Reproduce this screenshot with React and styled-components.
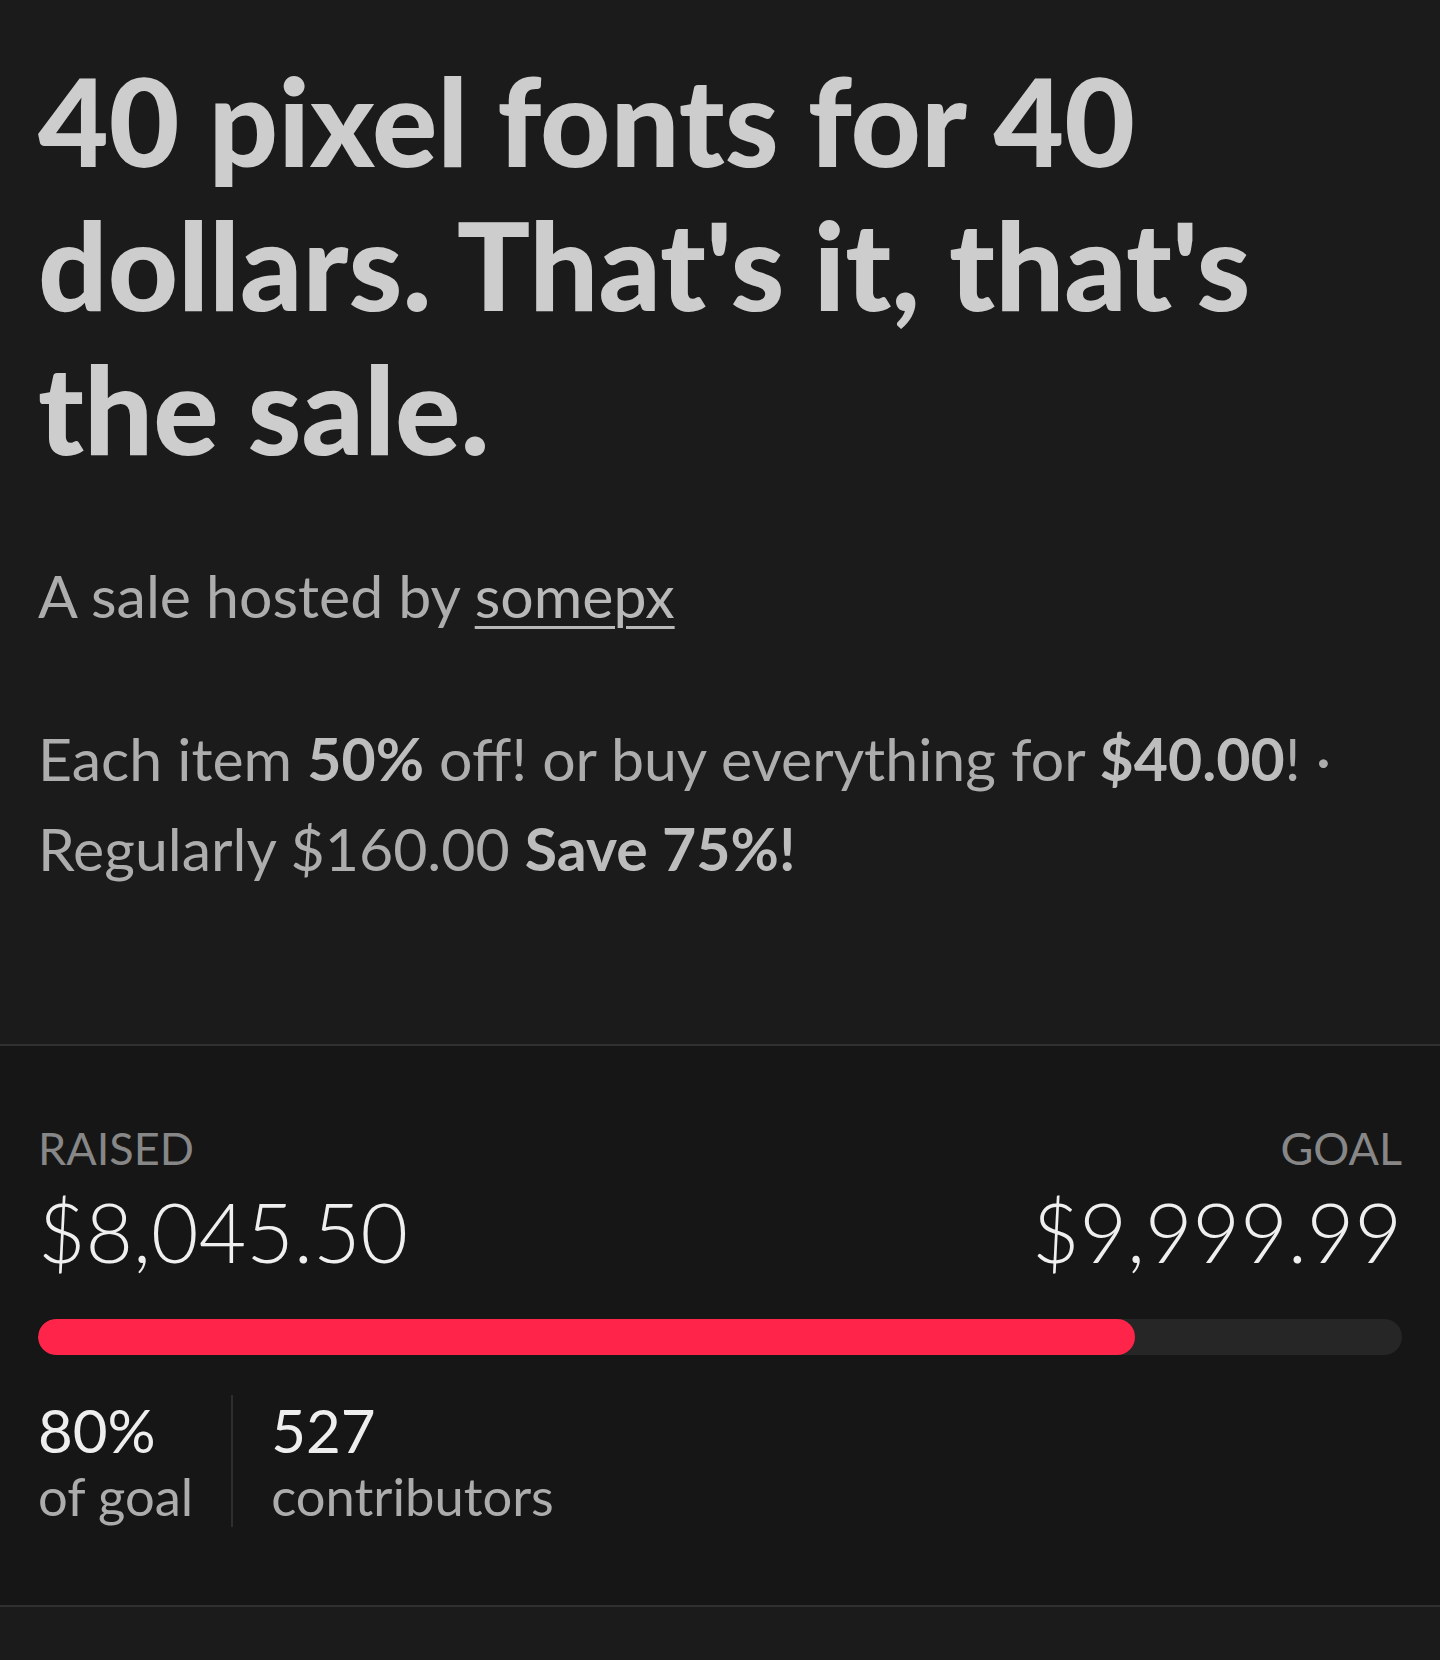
import React from "react";
import styled, { createGlobalStyle } from "styled-components";

const GlobalStyle = createGlobalStyle`
  html, body {
    margin: 0;
    padding: 0;
    background-color: #1b1b1b;
  }

  body {
    font-family: Lato, "Noto Sans", sans-serif;
  }
`;

const Page = styled.div`
  width: 1440px;
  min-height: 1660px;
  background-color: #1b1b1b;
`;

const Header = styled.section`
  padding: 48px 38px 150px 38px;
  border-bottom: 2px solid #303030;
`;

const Title = styled.h1`
  margin: 0;
  font-size: 122px;
  line-height: 144px;
  font-weight: 900;
  color: #cdcdcd;
`;

const Hosted = styled.p`
  margin: 71px 0 0 0;
  font-size: 59px;
  line-height: 90px;
  font-weight: 400;
  color: #adadad;

  a {
    color: #b8b8b8;
    text-decoration: underline;
    text-decoration-thickness: 3px;
    text-underline-offset: 8px;
  }
`;

const Description = styled.p`
  margin: 73px 0 0 0;
  font-size: 59px;
  line-height: 90px;
  font-weight: 400;
  color: #adadad;

  strong {
    font-weight: 700;
    color: #bdbdbd;
  }
`;

const Stats = styled.section`
  padding: 76px 38px 78px 38px;
  background-color: #161616;
  border-bottom: 2px solid #303030;
`;

const AmountRow = styled.div`
  display: flex;
  justify-content: space-between;
`;

const AmountCol = styled.div`
  display: flex;
  flex-direction: column;
  align-items: ${(p) => (p.$right ? "flex-end" : "flex-start")};
`;

const Label = styled.span`
  font-size: 45px;
  line-height: 53px;
  font-weight: 400;
  color: #878787;
  text-transform: uppercase;
`;

const Amount = styled.span`
  margin-top: 8px;
  font-size: 82px;
  line-height: 96px;
  font-weight: 300;
  color: #efefef;
`;

const Track = styled.div`
  margin-top: 40px;
  height: 36px;
  border-radius: 18px;
  background-color: #262626;
  overflow: hidden;
`;

const Fill = styled.div`
  height: 100%;
  border-radius: 18px;
  background-color: #ff2449;
`;

const Figures = styled.div`
  display: flex;
  margin-top: 40px;
`;

const Figure = styled.div`
  display: flex;
  flex-direction: column;
  padding: 0 38px;
  border-left: 2px solid #2e2e2e;

  &:first-child {
    padding-left: 0;
    border-left: none;
  }
`;

const FigureValue = styled.span`
  font-size: 60px;
  line-height: 70px;
  font-weight: 400;
  color: #eeeeee;
`;

const FigureLabel = styled.span`
  font-size: 52.5px;
  line-height: 62px;
  font-weight: 400;
  color: #acacac;
`;

const raised = 8045.5;
const goal = 9999.99;

const App = () => {
  const percent = (raised / goal) * 100;

  return (
    <Page>
      <GlobalStyle />
      <Header>
        <Title>40 pixel fonts for 40 dollars. That's it, that's the sale.</Title>
        <Hosted>
          A sale hosted by <a href="#somepx">somepx</a>
        </Hosted>
        <Description>
          Each item <strong>50%</strong> off! or buy everything for{" "}
          <strong>$40.00</strong>! · Regularly $160.00 <strong>Save 75%!</strong>
        </Description>
      </Header>
      <Stats>
        <AmountRow>
          <AmountCol>
            <Label>Raised</Label>
            <Amount>$8,045.50</Amount>
          </AmountCol>
          <AmountCol $right>
            <Label>Goal</Label>
            <Amount>$9,999.99</Amount>
          </AmountCol>
        </AmountRow>
        <Track>
          <Fill style={{ width: `${percent}%` }} />
        </Track>
        <Figures>
          <Figure>
            <FigureValue>80%</FigureValue>
            <FigureLabel>of goal</FigureLabel>
          </Figure>
          <Figure>
            <FigureValue>527</FigureValue>
            <FigureLabel>contributors</FigureLabel>
          </Figure>
        </Figures>
      </Stats>
    </Page>
  );
};

export default App;
